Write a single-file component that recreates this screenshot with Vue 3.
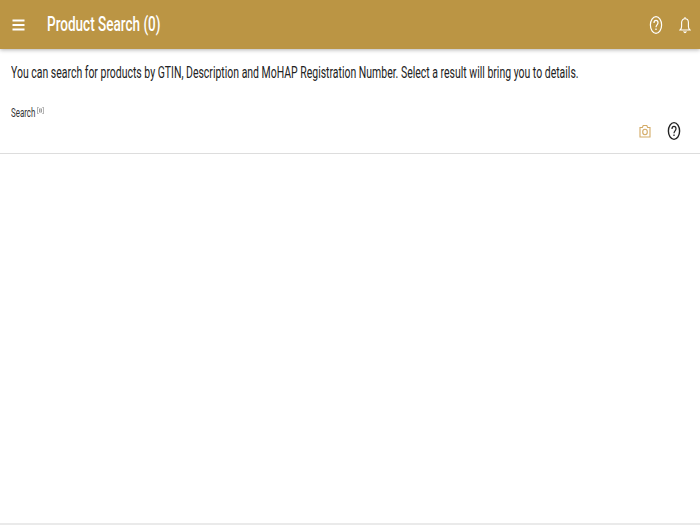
<template>
  <div class="page">
    <header class="toolbar">
      <button class="icon-btn menu" aria-label="Menu">
        <svg width="13" height="12" viewBox="0 0 13 12">
          <path d="M.5 1.5h12M.5 6h12M.5 10.5h12" stroke="#fff" stroke-width="2" fill="none" />
        </svg>
      </button>
      <h1 class="title"><span class="squeeze">Product Search ({{ count }})</span></h1>
      <div class="actions">
        <svg class="help" width="14" height="20" viewBox="0 0 14 20" fill="none" stroke="#fff">
          <ellipse cx="7" cy="10" rx="5.6" ry="8.4" stroke-width="1.2" />
          <path d="M5 8C5 6.2 5.9 5.4 7 5.4S9 6.2 9 7.8C9 9.7 7 10 7 12.2" stroke-width="1.2" />
          <path d="M7 13.4v1.6" stroke-width="1.3" />
        </svg>
        <svg class="bell" width="12" height="18" viewBox="0 0 12 18" fill="none" stroke="#fff" stroke-width="1.1">
          <path d="M1 14c1-1 1.6-1.6 1.6-3.6V6.6C2.6 4.2 4 2.8 6 2.8S9.4 4.2 9.4 6.6v3.8c0 2 .6 2.6 1.6 3.6z" />
          <path d="M6 1v1.8M4.8 15.2c.2 1 .6 1.6 1.2 1.6s1-.6 1.2-1.6" />
        </svg>
      </div>
    </header>

    <main class="content">
      <p class="intro">
        <span class="squeeze">You can search for products by GTIN, Description and MoHAP Registration Number. Select a result will bring you to details.</span>
      </p>
      <section class="search">
        <div class="label">
          <span class="squeeze label-text">Search</span>
          <svg class="scan" width="7" height="7" viewBox="0 0 7 7">
            <path d="M0 0h1v7H0zM6 0h1v7H6z" fill="#b5b5b5" />
            <path d="M1 0h1v1H1zM5 0h1v1H5zM1 6h1v1H1zM5 6h1v1H5z" fill="#c8c8c8" />
            <path d="M2 1.500h3v4H2z" fill="#a0a0a0" />
            <path d="M3 1.500h1v4H3z" fill="#d4d4d4" />
          </svg>
        </div>
        <div class="tools">
          <svg width="12" height="14" viewBox="0 0 12 14" fill="none" stroke="#d4ab66" stroke-width="1.1">
            <path d="M1 3.5h2.4L4.2 1.5h3.6l.8 2H11V13H1z" />
            <ellipse cx="6" cy="8" rx="2.3" ry="2.7" />
          </svg>
          <svg width="14" height="20" viewBox="0 0 14 20" fill="none" stroke="#222">
            <ellipse cx="7" cy="10" rx="5.6" ry="8.4" stroke-width="1.4" />
            <path d="M5 8C5 6.2 5.9 5.4 7 5.4S9 6.2 9 7.8C9 9.7 7 10 7 12.2" stroke-width="1.2" />
            <path d="M7 13.4v1.6" stroke-width="1.3" />
          </svg>
        </div>
      </section>
    </main>
    <div class="bottom-line"></div>
  </div>
</template>

<script setup>
import { ref } from 'vue'

const count = ref(0)
</script>

<style>
html, body {
  margin: 0;
  background: #fff;
}
</style>

<style scoped>
.page {
  width: 700px;
  height: 525px;
  display: flex;
  flex-direction: column;
  overflow: hidden;
  font-family: Roboto, "Liberation Sans", sans-serif;
  background: #fff;
}

.toolbar {
  height: 49px;
  flex: none;
  display: flex;
  align-items: center;
  padding: 0 9px 0 12px;
  background: #bb9544;
  box-shadow: 0 1px 4px rgba(0, 0, 0, 0.3);
  color: #fff;
  position: relative;
}

.icon-btn {
  border: 0;
  padding: 0;
  background: none;
  display: flex;
}

.title {
  margin: 0 0 0 22px;
  font-size: 20px;
  font-weight: 500;
  line-height: 49px;
  white-space: nowrap;
}

.squeeze {
  display: inline-block;
  transform-origin: left center;
  white-space: nowrap;
}

.title .squeeze {
  transform: scaleX(0.677);
}

.actions {
  margin-left: auto;
  display: flex;
  align-items: center;
  gap: 16px;
}

.content {
  flex: 1;
  min-height: 0;
  display: flex;
  flex-direction: column;
}

.intro {
  margin: 0;
  padding: 15px 11px 0;
  font-size: 16px;
  line-height: 18px;
  color: #222;
}

.intro .squeeze {
  transform: scaleX(0.654);
}

.search {
  margin-top: 24px;
  border-bottom: 1px solid #ddd;
  padding: 0 19px 12px 11px;
}

.label {
  display: flex;
  gap: 2px;
  height: 14px;
  align-items: flex-start;
}

.label-text {
  font-size: 12px;
  line-height: 14px;
  color: #333;
  transform: scaleX(0.66);
  width: 24px;
}

.scan {
  margin-top: 1px;
}

.tools {
  display: flex;
  justify-content: flex-end;
  align-items: center;
  gap: 16px;
  margin-top: 1px;
}

.bottom-line {
  flex: none;
  height: 2px;
  background: #eaeaea;
}
</style>
